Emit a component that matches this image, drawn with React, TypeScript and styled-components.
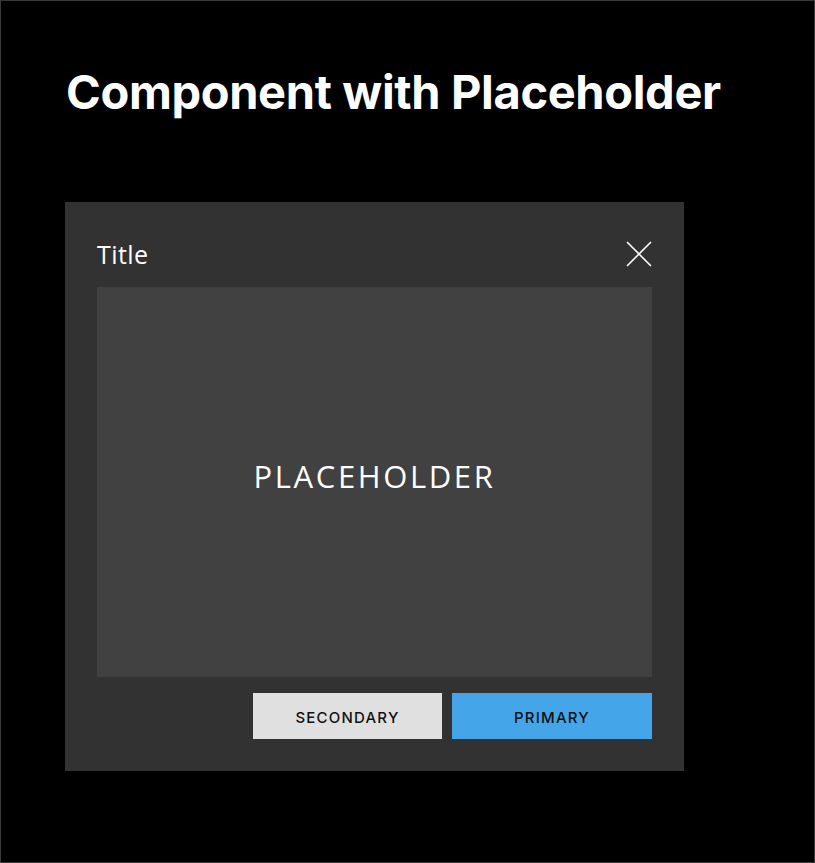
import React from "react";
import styled, { createGlobalStyle } from "styled-components";

const GlobalStyle = createGlobalStyle`
  html, body { margin: 0; padding: 0; background: #000; }
  * { box-sizing: border-box; }
`;

const Frame = styled.div`
  width: 815px;
  height: 863px;
  background: #000;
  border: 1px solid #3a3a3a;
  padding: 63px 0 0 64px;
  display: flex;
  flex-direction: column;
  align-items: flex-start;
`;

const Heading = styled.h1`
  margin: 0 0 0 1px;
  font-family: Inter, "Liberation Sans", sans-serif;
  font-weight: 700;
  font-size: 47px;
  line-height: 56px;
  letter-spacing: -0.35px;
  color: #fff;
`;

const Dialog = styled.div`
  margin-top: 82px;
  width: 619px;
  height: 569px;
  background: #323232;
  padding: 24px 32px 32px 32px;
  display: flex;
  flex-direction: column;
`;

const Header = styled.div`
  display: flex;
  align-items: center;
  justify-content: space-between;
  height: 61px;
  padding-bottom: 6px;
`;

const Title = styled.div`
  font-family: "Open Sans", "Noto Sans", sans-serif;
  font-size: 25px;
  letter-spacing: 0.4px;
  color: #fff;
`;

const CloseButton = styled.button`
  border: 0;
  background: none;
  padding: 0;
  width: 26px;
  height: 26px;
  display: flex;
  cursor: pointer;
`;

const Placeholder = styled.div`
  height: 390px;
  background: #414141;
  display: flex;
  align-items: center;
  justify-content: center;
  font-family: "Open Sans", "Noto Sans", sans-serif;
  font-size: 31px;
  letter-spacing: 2.6px;
  color: #fff;
  padding-bottom: 12px;
`;

const Footer = styled.div`
  margin-top: 16px;
  display: flex;
  justify-content: flex-end;
  gap: 10px;
`;

const Button = styled.button<{ $primary?: boolean; $w: number }>`
  width: ${(p) => p.$w}px;
  height: 46px;
  border: 0;
  padding: 2px 0 0;
  background: ${(p) => (p.$primary ? "#44a6e9" : "#e0e0e0")};
  color: #111;
  font-family: Inter, "Open Sans", sans-serif;
  font-size: 15px;
  font-weight: 500;
  letter-spacing: 1.2px;
  cursor: pointer;
`;

export default function App() {
  return (
    <>
      <GlobalStyle />
      <Frame>
        <Heading>Component with Placeholder</Heading>
        <Dialog>
          <Header>
            <Title>Title</Title>
            <CloseButton aria-label="Close">
              <svg width="26" height="26" viewBox="0 0 26 26">
                <path d="M1 1 L25 25 M25 1 L1 25" stroke="#fff" strokeWidth="1.6" fill="none" />
              </svg>
            </CloseButton>
          </Header>
          <Placeholder>PLACEHOLDER</Placeholder>
          <Footer>
            <Button $w={189}>SECONDARY</Button>
            <Button $w={200} $primary>PRIMARY</Button>
          </Footer>
        </Dialog>
      </Frame>
    </>
  );
}
